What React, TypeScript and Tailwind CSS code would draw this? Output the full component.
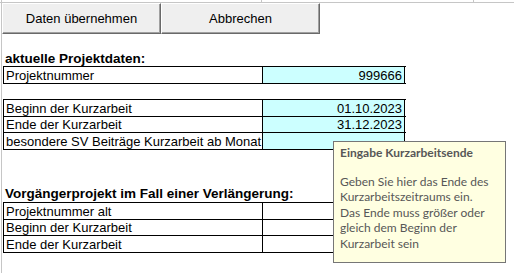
const Row = ({ label, value, cyan, h }: { label: string; value?: string; cyan?: boolean; h: string }) => {
    return (
        <div className={`flex border-b border-black ${h}`}>
            <div className="w-[260px] border-l border-r border-black px-[2px] flex items-center leading-none whitespace-nowrap overflow-hidden">
                {label}
            </div>
            <div className={`w-[142px] border-r border-black px-[2px] flex items-center justify-end leading-none ${cyan ? "bg-[#ccffff]" : "bg-white"}`}>
                {value}
            </div>
        </div>
    )
}

const Btn = ({ children }: { children: string }) => {
    return (
        <button className="w-[159px] h-[31px] bg-[#efefef] border border-t-white border-l-white border-r-[#696969] border-b-[#696969] shadow-[inset_-1px_-1px_0_#a0a0a0] text-[13px] text-black flex items-center justify-center">
            {children}
        </button>
    )
}

export default function App() {
    return (
        <div className="w-[514px] h-[273px] bg-white relative overflow-hidden font-['Liberation_Sans',Arial,sans-serif] text-[13px] text-black">
            <div className="h-[3px] border-b border-[#c6c6c6] flex">
                <div className="w-[2px] border-r border-[#c6c6c6]" />
                <div className="w-[260px] border-r border-[#c6c6c6]" />
                <div className="w-[212px] border-r border-[#c6c6c6]" />
            </div>
            <div className="ml-[1px] border-l border-[#c6c6c6] h-[270px]">
                <div className="flex">
                    <Btn>Daten übernehmen</Btn>
                    <Btn>Abbrechen</Btn>
                </div>
                <div className="pl-[1px]">
                    <div className="h-[15px]" />
                    <div className="h-[17px] flex items-end px-[2px] pb-[1px] font-bold text-[13.5px] leading-none whitespace-nowrap">aktuelle Projektdaten:</div>
                    <div className="border-t border-black w-[403px]">
                        <Row label="Projektnummer" value="999666" cyan h="h-[17px]" />
                    </div>
                    <div className="h-[15px]" />
                    <div className="border-t border-black w-[403px]">
                        <Row label="Beginn der Kurzarbeit" value="01.10.2023" cyan h="h-[17px]" />
                        <Row label="Ende der Kurzarbeit" value="31.12.2023" cyan h="h-[16px]" />
                        <Row label="besondere SV Beiträge Kurzarbeit ab Monat" cyan h="h-[17px]" />
                    </div>
                    <div className="h-[35px]" />
                    <div className="h-[17px] flex items-end px-[2px] pb-[2px] font-bold text-[13.5px] leading-none whitespace-nowrap">Vorgängerprojekt im Fall einer Verlängerung:</div>
                    <div className="border-t border-black w-[403px]">
                        <Row label="Projektnummer alt" h="h-[17px]" />
                        <Row label="Beginn der Kurzarbeit" h="h-[16px]" />
                        <Row label="Ende der Kurzarbeit" h="h-[17px]" />
                    </div>
                </div>
            </div>
            <div className="absolute left-[333px] top-[141px] w-[173px] h-[122px] bg-[#ffffe1] border border-[#767676] px-[6px] pt-[3px] font-['Lato',sans-serif] text-[12px] leading-[15.5px] text-[#575757] whitespace-nowrap">
                <div className="font-bold">Eingabe Kurzarbeitsende</div>
                <div className="h-[13px]" />
                <div>Geben Sie hier das Ende des</div>
                <div>Kurzarbeitszeitraums ein.</div>
                <div>Das Ende muss größer oder</div>
                <div>gleich dem Beginn der</div>
                <div>Kurzarbeit sein</div>
            </div>
        </div>
    )
}
